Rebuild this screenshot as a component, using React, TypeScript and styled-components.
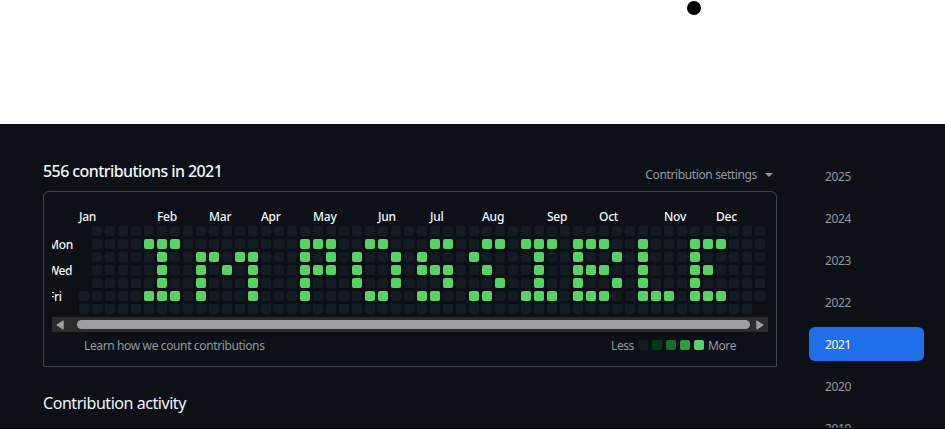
import React from "react";
import styled, { createGlobalStyle } from "styled-components";

const Global = createGlobalStyle`
  html, body { margin: 0; height: 429px; overflow: hidden; background: #fff; }
  * { box-sizing: border-box; }
  body { font-family: "Noto Sans", "Open Sans", sans-serif; font-size: 12px; color: #f0f6fc; }
`;

const Page = styled.div`
  width: 945px;
  height: 429px;
  overflow: hidden;
  display: flex;
  flex-direction: column;
`;

const Banner = styled.header`
  flex: none;
  height: 124px;
  background: #fff;
  padding: 1px 0 0 687px;
`;

const Dot = styled.div`
  width: 14px;
  height: 14px;
  border-radius: 50%;
  background: #000;
`;

const Profile = styled.main`
  flex: 1;
  min-height: 0;
  overflow: hidden;
  display: flex;
  background: #0d1117;
  border-bottom: 1px solid #010409;
  padding: 35px 21px 0 43px;
`;

const Main = styled.section`
  width: 734px;
  flex: none;
`;

const Text = styled.span<{ $size?: number; $track?: number; $color?: string; $weight?: number }>`
  font-size: ${(p) => p.$size ?? 12}px;
  letter-spacing: ${(p) => p.$track ?? 0}px;
  color: ${(p) => p.$color ?? "#f0f6fc"};
  font-weight: ${(p) => p.$weight ?? 400};
  white-space: nowrap;
`;

const TitleRow = styled.div`
  height: 32px;
  display: flex;
  justify-content: space-between;
  line-height: 24px;
`;

const Settings = styled.div`
  display: flex;
  align-items: center;
  gap: 8px;
  height: 32px;
  padding-right: 4px;
`;

const Card = styled.div`
  height: 176px;
  border: 1px solid #3d444d;
  border-radius: 6px 6px 0 0;
  padding: 17px 8px 0;
`;

const Calendar = styled.div`
  display: flex;
  height: 108px;
  overflow: hidden;
`;

const Days = styled.div`
  width: 27px;
  flex: none;
  padding-top: 29px;
  display: flex;
  flex-direction: column;
  align-items: flex-start;
  overflow: hidden;
`;

const Day = styled.div<{ $shift: number }>`
  height: 26px;
  line-height: 13px;
  margin-left: ${(p) => p.$shift}px;
`;

const Months = styled.div`
  display: grid;
  grid-template-columns: repeat(53, 10px);
  column-gap: 3px;
  height: 17px;
  line-height: 16px;
`;

const Month = styled.div<{ $week: number }>`
  grid-column: ${(p) => p.$week + 1};
  grid-row: 1;
  width: 0;
`;

const Weeks = styled.div`
  display: grid;
  grid-template-columns: repeat(53, 10px);
  grid-auto-rows: 10px;
  gap: 3px;
`;

const Cell = styled.div<{ $color: string }>`
  width: 10px;
  height: 10px;
  border-radius: 2px;
  background: ${(p) => p.$color};
`;

const Scrollbar = styled.div`
  height: 15px;
  background: #2c2c2c;
  display: flex;
  align-items: center;
  padding: 0 4px;
`;

const Thumb = styled.div`
  width: 673px;
  height: 9px;
  margin: 0 6px 0 13px;
  border-radius: 5px;
  background: #9f9f9f;
`;

const CardFooter = styled.div`
  display: flex;
  justify-content: space-between;
  align-items: center;
  height: 26px;
  padding: 0 32px;
`;

const Legend = styled.div`
  display: flex;
  align-items: center;
  gap: 4px;
`;

const ActivityTitle = styled.h2`
  margin: 24px 0 0;
  font-weight: 400;
  line-height: 24px;
  font-size: 16px;
`;

const Years = styled.nav`
  margin-left: 32px;
  width: 115px;
  display: flex;
  flex-direction: column;
  gap: 8px;
`;

const Year = styled.a<{ $active: boolean }>`
  flex: none;
  height: 34px;
  line-height: 36px;
  padding-left: 16px;
  border-radius: 6px;
  background: ${(p) => (p.$active ? "#1f6feb" : "transparent")};
`;

const LEVELS = ["#151b23", "#033a16", "#196c2e", "#2ea043", "#56d364"];
const MUTED = "#9198a1";

const months: [string, number][] = [
  ["Jan", 0], ["Feb", 6], ["Mar", 10], ["Apr", 14], ["May", 18], ["Jun", 23],
  ["Jul", 27], ["Aug", 31], ["Sep", 36], ["Oct", 40], ["Nov", 45], ["Dec", 49],
];

// Busy weeks for each weekday, Sunday first.
const busy: number[][] = [
  [],
  [5, 6, 7, 17, 18, 19, 22, 23, 27, 28, 31, 32, 34, 35, 36, 38, 39, 40, 43, 47, 48, 49],
  [6, 9, 10, 12, 13, 17, 19, 21, 24, 26, 30, 35, 38, 41, 43, 47],
  [6, 9, 11, 13, 17, 18, 19, 21, 24, 26, 27, 28, 31, 35, 38, 39, 40, 43, 47, 48],
  [6, 9, 13, 17, 21, 24, 28, 32, 35, 38, 41, 43, 47],
  [5, 6, 7, 9, 13, 17, 22, 23, 26, 27, 30, 31, 34, 35, 36, 38, 39, 40, 43, 44, 45, 47, 48, 49],
  [],
];

const cellColor = (day: number, week: number) => {
  if ((week === 0 && day < 5) || (week === 52 && day > 5)) return null;
  return busy[day].includes(week) ? LEVELS[4] : LEVELS[0];
};

const Blank = styled.div``;

export default function App() {
  return (
    <Page>
      <Global />
      <Banner><Dot /></Banner>
      <Profile>
        <Main>
          <TitleRow>
            <Text $size={16} $track={-0.58} $weight={500}>556 contributions in 2021</Text>
            <Settings>
              <Text $color={MUTED} $track={-0.37}>Contribution settings</Text>
              <svg width="8" height="4" viewBox="0 0 8 4"><path d="M0 0h8L4 4z" fill={MUTED} /></svg>
            </Settings>
          </TitleRow>
          <Card>
            <Calendar>
              <Days>
                <Day $shift={-4}><Text $weight={500} $track={-0.3}>Mon</Text></Day>
                <Day $shift={-4}><Text $weight={500} $track={-0.5}>Wed</Text></Day>
                <Day $shift={-4}><Text $weight={500} $track={-0.3}>Fri</Text></Day>
              </Days>
              <div>
                <Months>
                  {months.map(([name, week]) => (
                    <Month key={name} $week={week}><Text $weight={500} $track={-0.25}>{name}</Text></Month>
                  ))}
                </Months>
                <Weeks>
                  {busy.flatMap((_, day) =>
                    Array.from({ length: 53 }, (_, week) => {
                      const color = cellColor(day, week);
                      const key = `${day}-${week}`;
                      return color ? <Cell key={key} $color={color} /> : <Blank key={key} />;
                    })
                  )}
                </Weeks>
              </div>
            </Calendar>
            <Scrollbar>
              <svg width="8" height="10" viewBox="0 0 8 10"><path d="M7.2 0.8v8.4L0.8 5z" fill="#9f9f9f" stroke="#9f9f9f" strokeLinejoin="round" /></svg>
              <Thumb />
              <svg width="8" height="10" viewBox="0 0 8 10"><path d="M0.8 0.8v8.4L7.2 5z" fill="#9f9f9f" stroke="#9f9f9f" strokeLinejoin="round" /></svg>
            </Scrollbar>
            <CardFooter>
              <Text $color={MUTED} $track={-0.37}>Learn how we count contributions</Text>
              <Legend>
                <Text $color={MUTED} $track={-0.4}>Less</Text>
                {LEVELS.map((c) => <Cell key={c} $color={c} />)}
                <Text $color={MUTED} $track={-0.4}>More</Text>
              </Legend>
            </CardFooter>
          </Card>
          <ActivityTitle><Text $size={16} $track={-0.45}>Contribution activity</Text></ActivityTitle>
        </Main>
        <Years>
          {[2025, 2024, 2023, 2022, 2021, 2020, 2019].map((y) => (
            <Year key={y} $active={y === 2021}>
              <Text $track={-0.4} $color={y === 2021 ? "#fff" : MUTED}>{y}</Text>
            </Year>
          ))}
        </Years>
      </Profile>
    </Page>
  );
}
